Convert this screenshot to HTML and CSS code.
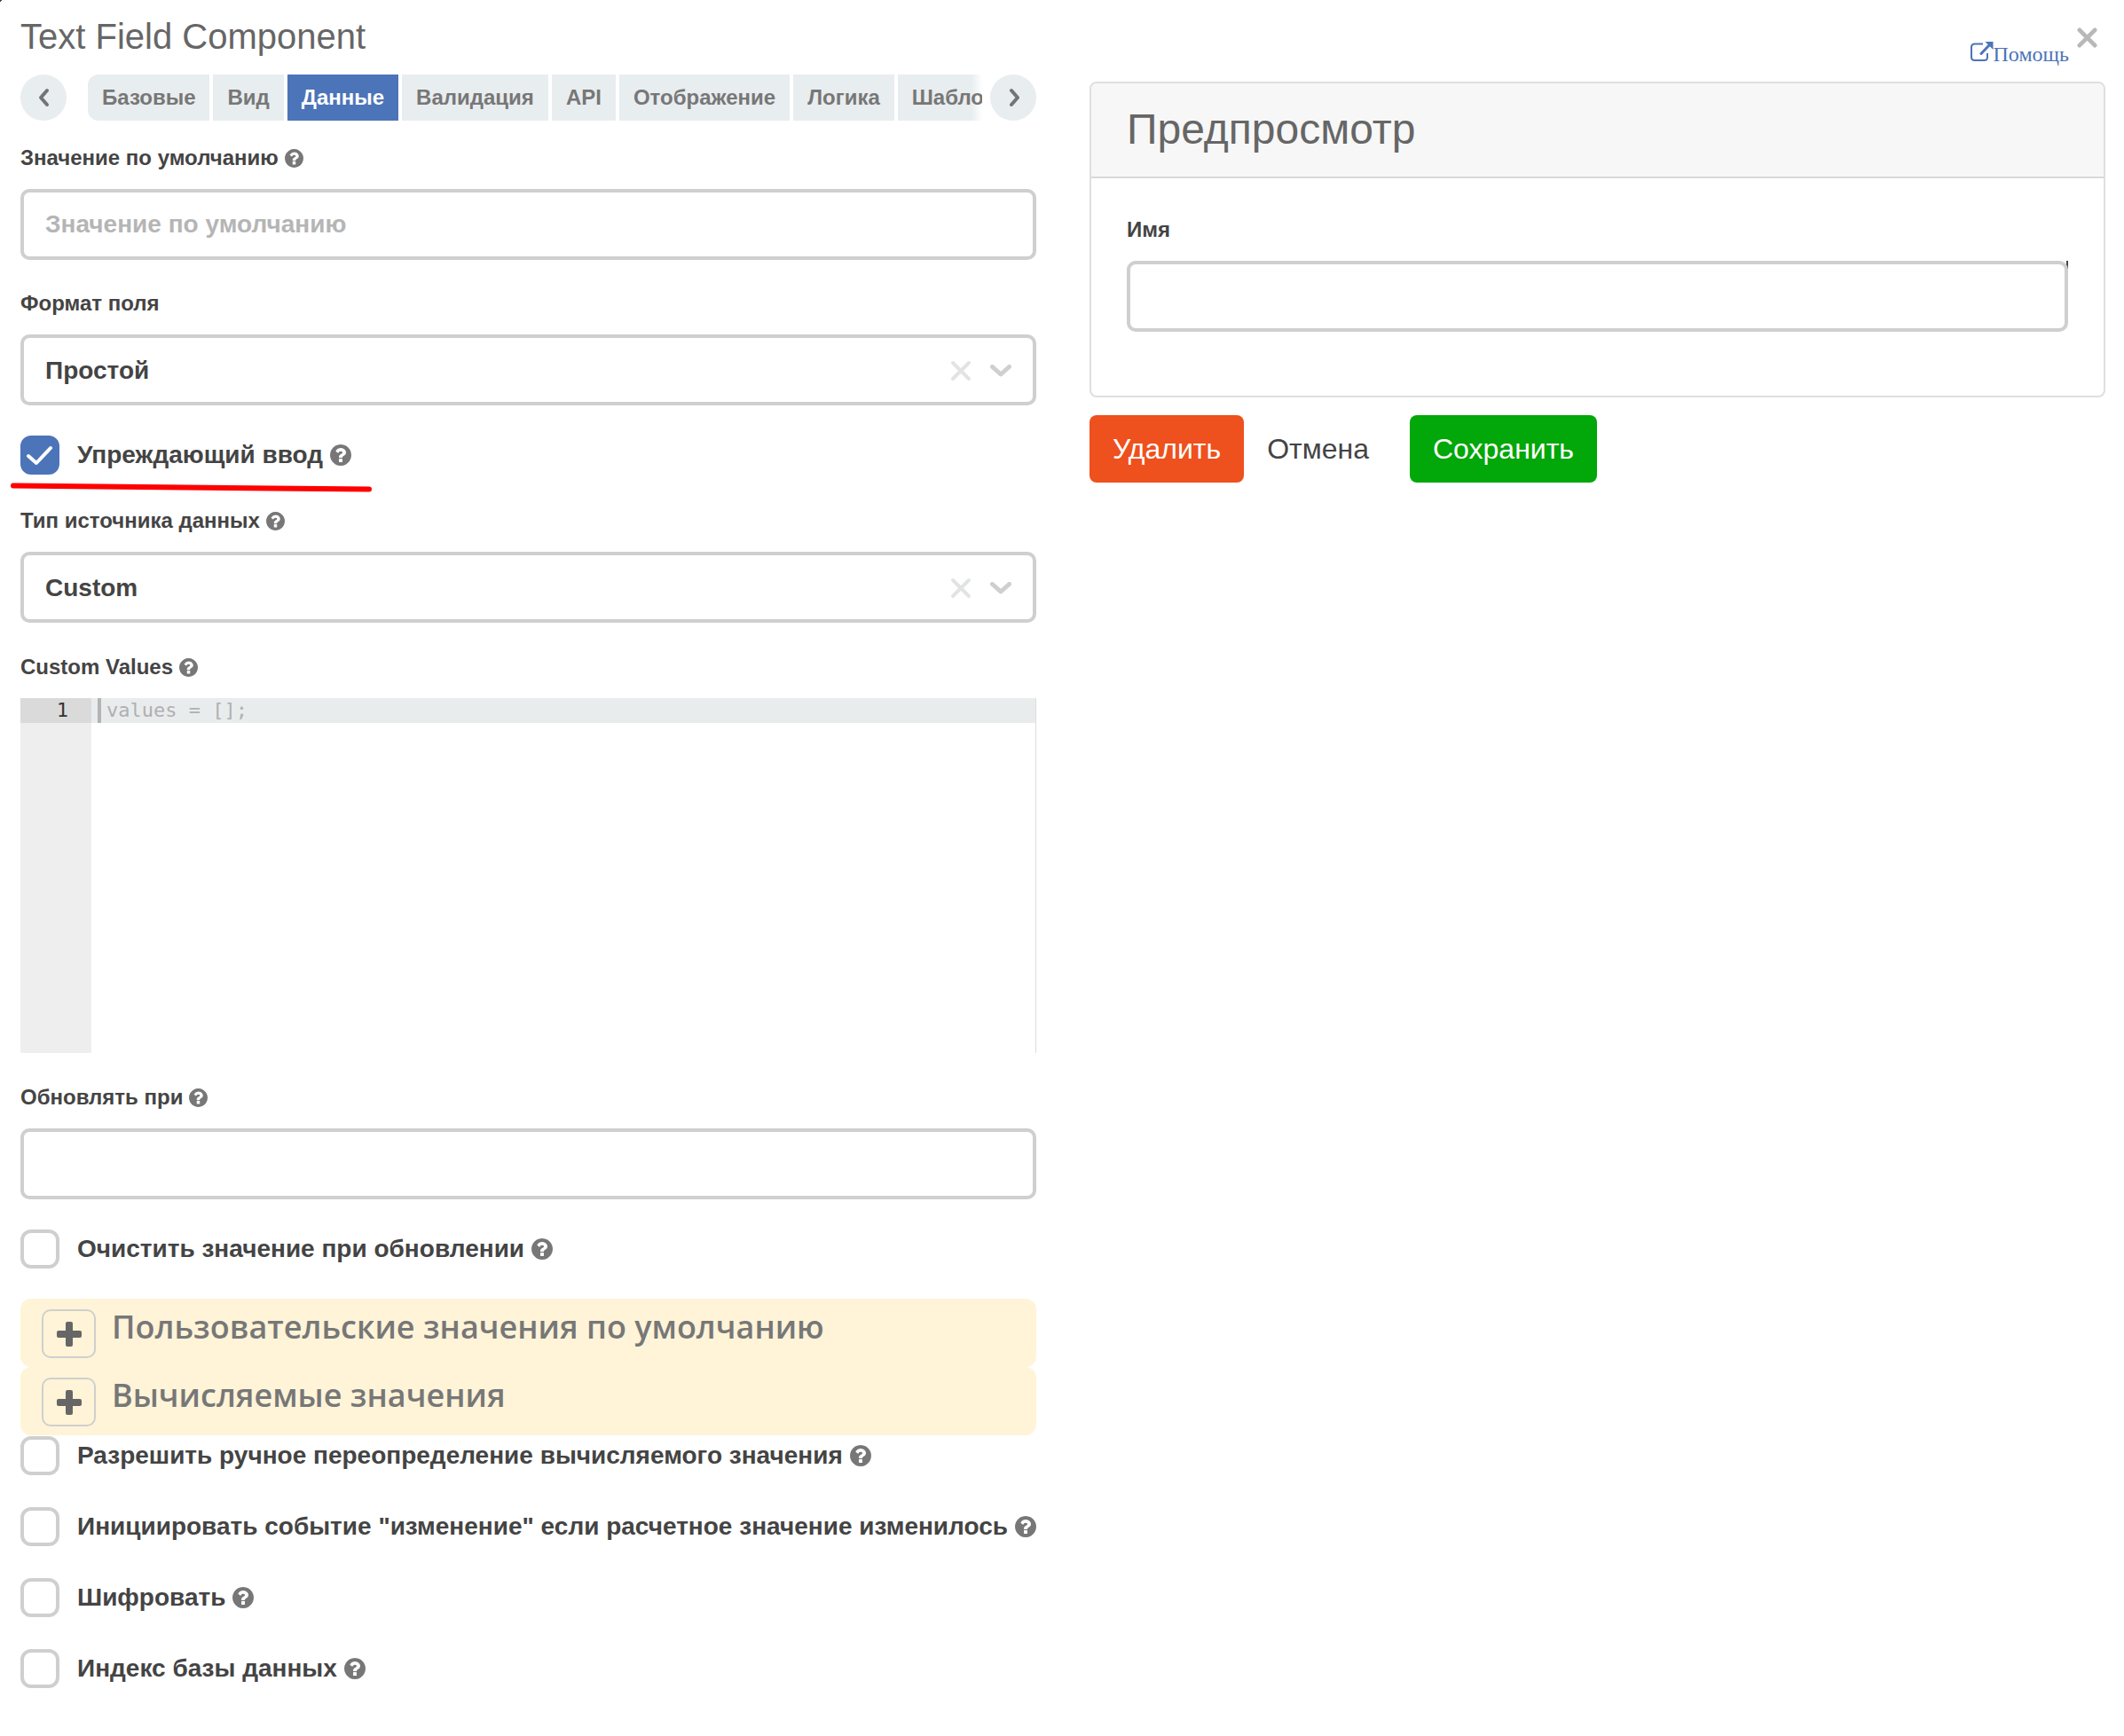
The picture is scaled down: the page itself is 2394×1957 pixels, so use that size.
FILE: index.html
```html
<!DOCTYPE html>
<html lang="ru">
<head>
<meta charset="utf-8">
<meta name="viewport" content="width=device-width, initial-scale=1">
<title>Text Field Component</title>
<link rel="stylesheet" href="styles.css">
</head>
<body>
<svg class="defs" aria-hidden="true">
  <symbol id="i-help" viewBox="0 0 1536 1536"><path d="M896 1248v-192q0-14-9-23t-23-9h-192q-14 0-23 9t-9 23v192q0 14 9 23t23 9h192q14 0 23-9t9-23zm256-672q0-88-55.500-163t-138.500-116-170-41q-243 0-371 213-15 24 8 42l132 100q7 6 19 6 16 0 25-12 53-68 86-92 34-24 86-24 48 0 85.500 26t37.500 59q0 38-20 61t-68 45q-63 28-115.500 86.500t-52.500 125.500v36q0 14 9 23t23 9h192q14 0 23-9t9-23q0-19 21.500-49.500t54.500-49.500q32-18 49-28.500t46-35 44.500-48 28-60.500 12.500-81zm384 192q0 209-103 385.500t-279.500 279.500-385.500 103-385.500-103-279.500-279.500-103-385.500 103-385.500 279.500-279.500 385.500-103 385.500 103 279.500 279.500 103 385.500z"/></symbol>
  <symbol id="i-plus" viewBox="0 0 28 28"><path d="M12 0h4a2 2 0 0 1 2 2v8h8a2 2 0 0 1 2 2v4a2 2 0 0 1-2 2h-8v8a2 2 0 0 1-2 2h-4a2 2 0 0 1-2-2v-8H2a2 2 0 0 1-2-2v-4a2 2 0 0 1 2-2h8V2a2 2 0 0 1 2-2z"/></symbol>
  <symbol id="i-clear" viewBox="0 0 24 24"><path d="M3 3l18 18M21 3L3 21"/></symbol>
  <symbol id="i-down" viewBox="0 0 24 14"><path d="M2.500 2.500L12 11l9.500-8.500"/></symbol>
</svg>

<main class="dialog">
  <section class="settings">
    <h1 class="title">Text Field Component</h1>

    <nav class="tabbar">
      <button class="scroll" type="button" aria-label="Назад"><svg width="14" height="22" viewBox="0 0 14 22"><path d="M11 3L4 11l7 8"/></svg></button>
      <div class="tabs" role="tablist">
        <button class="tab" role="tab" type="button">Базовые</button>
        <button class="tab" role="tab" type="button">Вид</button>
        <button class="tab tab-active" role="tab" type="button" aria-selected="true">Данные</button>
        <button class="tab" role="tab" type="button">Валидация</button>
        <button class="tab" role="tab" type="button">API</button>
        <button class="tab" role="tab" type="button">Отображение</button>
        <button class="tab" role="tab" type="button">Логика</button>
        <button class="tab tab-cut" role="tab" type="button">Шаблон</button>
      </div>
      <button class="scroll" type="button" aria-label="Вперёд"><svg width="14" height="22" viewBox="0 0 14 22"><path d="M5 3l7 8-7 8"/></svg></button>
    </nav>

    <form class="fields">
      <div class="field">
        <label class="label" for="default">Значение по умолчанию <svg class="help"><use href="#i-help"/></svg></label>
        <input class="control" id="default" type="text" placeholder="Значение по умолчанию">
      </div>

      <div class="field">
        <label class="label" for="format">Формат поля</label>
        <div class="select">
          <select class="control" id="format"><option>Простой</option></select>
          <span class="select-icons"><svg class="clear"><use href="#i-clear"/></svg><svg class="down"><use href="#i-down"/></svg></span>
        </div>
      </div>

      <div class="check check-marked">
        <span class="box"><input type="checkbox" id="typeahead" checked><svg class="tick" viewBox="0 0 44 44"><path d="M9 23l9 8 16-17"/></svg></span>
        <label for="typeahead">Упреждающий ввод <svg class="help"><use href="#i-help"/></svg></label>
        <svg class="underline" viewBox="0 0 410 12" aria-hidden="true"><path d="M4 3.500L405 7.500"/></svg>
      </div>

      <div class="field">
        <label class="label" for="source">Тип источника данных <svg class="help"><use href="#i-help"/></svg></label>
        <div class="select">
          <select class="control" id="source"><option>Custom</option></select>
          <span class="select-icons"><svg class="clear"><use href="#i-clear"/></svg><svg class="down"><use href="#i-down"/></svg></span>
        </div>
      </div>

      <div class="field field-code">
        <label class="label" for="values">Custom Values <svg class="help"><use href="#i-help"/></svg></label>
        <div class="editor">
          <div class="gutter"><span class="line-number">1</span></div>
          <textarea class="code" id="values" placeholder="values = [];"></textarea>
        </div>
      </div>

      <div class="field">
        <label class="label" for="refresh">Обновлять при <svg class="help"><use href="#i-help"/></svg></label>
        <input class="control" id="refresh" type="text">
      </div>

      <div class="check">
        <span class="box"><input type="checkbox" id="clear"></span>
        <label for="clear">Очистить значение при обновлении <svg class="help"><use href="#i-help"/></svg></label>
      </div>

      <div class="panels">
        <div class="panel">
          <button class="expand" type="button" aria-label="Развернуть"><svg><use href="#i-plus"/></svg></button>
          <h2 class="panel-title">Пользовательские значения по умолчанию</h2>
        </div>
        <div class="panel">
          <button class="expand" type="button" aria-label="Развернуть"><svg><use href="#i-plus"/></svg></button>
          <h2 class="panel-title">Вычисляемые значения</h2>
        </div>
        <div class="checks">
          <div class="check">
            <span class="box"><input type="checkbox" id="override"></span>
            <label for="override">Разрешить ручное переопределение вычисляемого значения <svg class="help"><use href="#i-help"/></svg></label>
          </div>
          <div class="check">
            <span class="box"><input type="checkbox" id="trigger"></span>
            <label for="trigger">Инициировать событие "изменение" если расчетное значение изменилось <svg class="help"><use href="#i-help"/></svg></label>
          </div>
          <div class="check">
            <span class="box"><input type="checkbox" id="encrypt"></span>
            <label for="encrypt">Шифровать <svg class="help"><use href="#i-help"/></svg></label>
          </div>
          <div class="check">
            <span class="box"><input type="checkbox" id="index"></span>
            <label for="index">Индекс базы данных <svg class="help"><use href="#i-help"/></svg></label>
          </div>
        </div>
      </div>
    </form>
  </section>

  <section class="side">
    <div class="topbar">
      <a class="help-link" href="#help"><svg width="26" height="23" viewBox="0 0 26 23"><path class="frame" d="M14 2.500H5Q1 2.500 1 6v11.500Q1 21 5 21h10.500q3.500 0 3.500-3.500V13"/><path class="stem" d="M12 13.500L21 4"/><path class="head" d="M16.500 0H25.500v9z"/></svg>Помощь</a>
      <button class="close" type="button" aria-label="Закрыть"><svg><use href="#i-clear"/></svg></button>
    </div>

    <div class="card">
      <h2 class="card-title">Предпросмотр</h2>
      <div class="card-body">
        <label class="label" for="name">Имя</label>
        <div class="preview-input"><input class="control" id="name" type="text"></div>
      </div>
    </div>

    <div class="actions">
      <button class="btn btn-danger" type="button">Удалить</button>
      <button class="btn btn-plain" type="button">Отмена</button>
      <button class="btn btn-success" type="button">Сохранить</button>
    </div>
  </section>
</main>
</body>
</html>
```

FILE: styles.css
```css
* {
  box-sizing: border-box;
}

body {
  margin: 0;
  background: linear-gradient(135deg, #444 2px, transparent 2px) no-repeat #fff;
  color: #444;
  font-family: "Liberation Sans", Arial, sans-serif;
}

button,
input,
select,
textarea {
  margin: 0;
  font: inherit;
  color: inherit;
}

button {
  border: 0;
  padding: 0;
  cursor: pointer;
}

svg {
  display: block;
  flex: none;
}

.defs {
  position: absolute;
  width: 0;
  height: 0;
}

.dialog {
  display: grid;
  grid-template-columns: minmax(0, 1fr) minmax(0, 1fr);
  gap: 60px;
  padding: 0 21px 52px 23px;
}

.title {
  margin: 0;
  padding: 17px 0 19px;
  color: #666;
  font-size: 40px;
  line-height: 48px;
  font-weight: 400;
}

/* Tabs */

.tabbar {
  display: flex;
  margin-bottom: 27px;
}

.scroll {
  display: flex;
  flex: none;
  align-items: center;
  justify-content: center;
  width: 52px;
  height: 52px;
  border-radius: 50%;
  background: #e8edef;
}

.scroll svg {
  fill: none;
  stroke: #747474;
  stroke-width: 4;
  stroke-linecap: round;
  stroke-linejoin: round;
}

.tabs {
  display: flex;
  flex: 1;
  gap: 4px;
  min-width: 0;
  margin: 0 9px 0 24px;
}

.tab {
  flex: none;
  height: 52px;
  padding: 0 16px;
  background: #e8edef;
  color: #777;
  font-size: 24px;
  font-weight: 700;
  line-height: 52px;
  white-space: nowrap;
}

.tab:first-child {
  border-radius: 12px 0 0 12px;
}

.tab-active {
  background: #4c74b8;
  color: #fff;
}

.tab-cut {
  flex: 1;
  min-width: 0;
  padding-right: 0;
  overflow: hidden;
  background: linear-gradient(to right, #e8edef calc(100% - 12px), #fff);
  text-align: left;
}

/* Form fields */

.fields {
  display: flex;
  flex-direction: column;
  gap: 34px;
}

.label {
  display: flex;
  align-items: center;
  gap: 7px;
  margin-bottom: 20px;
  font-size: 24px;
  font-weight: 700;
  line-height: 30px;
}

.help {
  width: 21px;
  height: 21px;
  fill: #777;
}

.control {
  display: block;
  width: 100%;
  height: 80px;
  padding: 0 24px;
  border: 4px solid #cfcfcf;
  border-radius: 10px;
  outline: 0;
  background: #fff;
  appearance: none;
  font-size: 28px;
  font-weight: 700;
}

.control::placeholder {
  color: #b5b5b5;
  opacity: 1;
}

.select {
  position: relative;
}

.select-icons {
  position: absolute;
  top: 2px;
  right: 28px;
  bottom: 0;
  display: flex;
  align-items: center;
  gap: 21px;
  pointer-events: none;
}

.clear,
.down {
  width: 24px;
  height: 24px;
  fill: none;
  stroke: #e2e4e4;
  stroke-width: 4;
  stroke-linecap: round;
}

.down {
  height: 14px;
  stroke: #cfcfcf;
  stroke-width: 5;
  stroke-linejoin: round;
}

/* Check boxes */

.check {
  position: relative;
  display: flex;
  gap: 20px;
  font-size: 28px;
  font-weight: 700;
  line-height: 44px;
}

.check label {
  display: flex;
  align-items: center;
  gap: 8px;
}

.check .help {
  width: 24px;
  height: 24px;
}

.check-marked {
  margin-bottom: 3px;
}

.box {
  position: relative;
  flex: none;
  width: 44px;
  height: 44px;
}

.box input {
  display: block;
  width: 44px;
  height: 44px;
  border: 4px solid #cfcfcf;
  border-radius: 12px;
  background: #fff;
  appearance: none;
}

.box input:checked {
  border-color: #4c74b8;
  background: #4c74b8;
}

.tick {
  position: absolute;
  inset: 0;
  fill: none;
  stroke: #fff;
  stroke-width: 4;
  stroke-linecap: round;
  stroke-linejoin: round;
  pointer-events: none;
}

.underline {
  position: absolute;
  top: 53px;
  left: -12px;
  width: 410px;
  height: 12px;
  fill: none;
  stroke: #f00;
  stroke-width: 6;
  stroke-linecap: round;
}

/* Code editor */

.field-code {
  padding: 1px 0;
}

.editor {
  display: flex;
  height: 400px;
  border-right: 1px solid #ddd;
  font-family: "DejaVu Sans Mono", monospace;
  font-size: 22px;
  line-height: 28px;
}

.gutter {
  width: 80px;
  background: #eee;
}

.line-number {
  display: block;
  height: 28px;
  padding-right: 26px;
  background: #dadada;
  color: #333;
  text-align: right;
}

.code {
  flex: 1;
  padding: 0 17px;
  border: 0;
  outline: 0;
  resize: none;
  background:
    linear-gradient(#b4b4b4, #b4b4b4) 7px 0 / 4px 28px no-repeat,
    linear-gradient(#e9eced, #e9eced) 0 0 / 100% 28px no-repeat;
}

.code::placeholder {
  color: #b0b0b0;
  opacity: 1;
}

/* Collapsible panels */

.panel {
  display: flex;
  align-items: flex-start;
  gap: 18px;
  padding: 12px 24px 10px;
  border-radius: 12px;
  background: #fff4d8;
}

.expand {
  display: flex;
  align-items: center;
  justify-content: center;
  width: 61px;
  height: 55px;
  border: 2px solid #cfcfcf;
  border-radius: 10px;
  background: none;
}

.expand svg {
  width: 28px;
  height: 28px;
  fill: #666;
}

.panel-title {
  margin: 0;
  color: #777;
  font-family: "Open Sans", "Noto Sans", sans-serif;
  font-size: 36px;
  font-weight: 600;
  line-height: 40px;
}

.checks {
  display: flex;
  flex-direction: column;
  gap: 36px;
  padding-top: 1px;
}

/* Preview side */

.topbar {
  display: flex;
  justify-content: flex-end;
  gap: 9px;
  height: 92px;
  padding: 30px 9px 0 0;
}

.help-link {
  display: flex;
  align-items: flex-start;
  padding-top: 17px;
  color: #4c74b8;
  font-family: "Liberation Serif", "Times New Roman", serif;
  font-size: 24px;
  line-height: 28px;
  text-decoration: none;
}

.help-link .frame {
  fill: none;
  stroke: #4c74b8;
  stroke-width: 2;
}

.help-link .stem {
  fill: none;
  stroke: #4c74b8;
  stroke-width: 3;
  stroke-linecap: round;
}

.help-link .head {
  fill: #4c74b8;
}

.close {
  height: 24px;
  background: none;
}

.close svg {
  width: 23px;
  height: 23px;
  fill: none;
  stroke: #b8b8b8;
  stroke-width: 5;
  stroke-linecap: round;
}

.card {
  border: 2px solid #dfdfdf;
  border-radius: 8px;
  overflow: hidden;
}

.card-title {
  margin: 0;
  padding: 24px 40px 25px;
  border-bottom: 2px solid #d9d9d9;
  background: #f7f7f7;
  color: #666;
  font-size: 48px;
  font-weight: 400;
  line-height: 56px;
}

.card-body {
  padding: 43px 40px 72px;
}

/* Dark caret edge showing behind the rounded corner */
.preview-input {
  background: linear-gradient(#444, #444) top right / 2px 9px no-repeat;
}

.actions {
  display: flex;
  margin-top: 20px;
}

.btn {
  height: 76px;
  padding: 0 26px;
  border-radius: 8px;
  font-size: 32px;
  line-height: 76px;
}

.btn-danger {
  background: #ee501e;
  color: #fff;
}

.btn-plain {
  margin-right: 20px;
  background: none;
}

.btn-success {
  background: #02a709;
  color: #fff;
}
```
